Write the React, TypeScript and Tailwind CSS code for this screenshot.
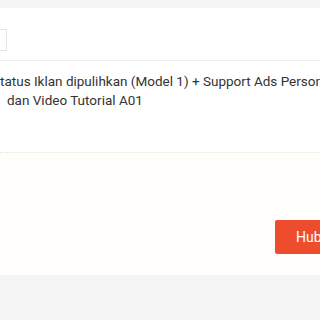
export default function App() {
  return (
    <div
      className="w-[320px] h-[320px] overflow-hidden bg-[#f5f5f5] pt-2"
      style={{ fontFamily: 'Roboto, "Liberation Sans", sans-serif' }}
    >
      <div className="bg-white">
        {/* Product header */}
        <div className="h-[53px] border-b border-[#ececec] pt-[21px]">
          <div className="-ml-[17px] w-[24px] h-[22px] border border-[#e5e5e5]" />
        </div>

        {/* Item name */}
        <div className="pt-[11px] pb-[42px] text-[13.5px] leading-[19px] text-[#333]">
          <div className="-ml-[8px] whitespace-nowrap">
            Status Iklan dipulihkan (Model 1) + Support Ads Personal
          </div>
          <div className="pl-[7px] whitespace-nowrap">dan Video Tutorial A01</div>
        </div>

        {/* Actions */}
        <div className="border-t border-dotted border-t-[#e6e6e6] bg-[#fffefb] pt-[67px] pb-[21px] border-b border-b-[#ececec]">
          <div className="pl-[275px]">
            <button className="h-[34px] w-[140px] rounded-[2px] bg-[#ee4d2d] pl-[21px] text-left text-[14px] text-white whitespace-nowrap">
              Hubungi Penjual
            </button>
          </div>
        </div>
      </div>
    </div>
  );
}
